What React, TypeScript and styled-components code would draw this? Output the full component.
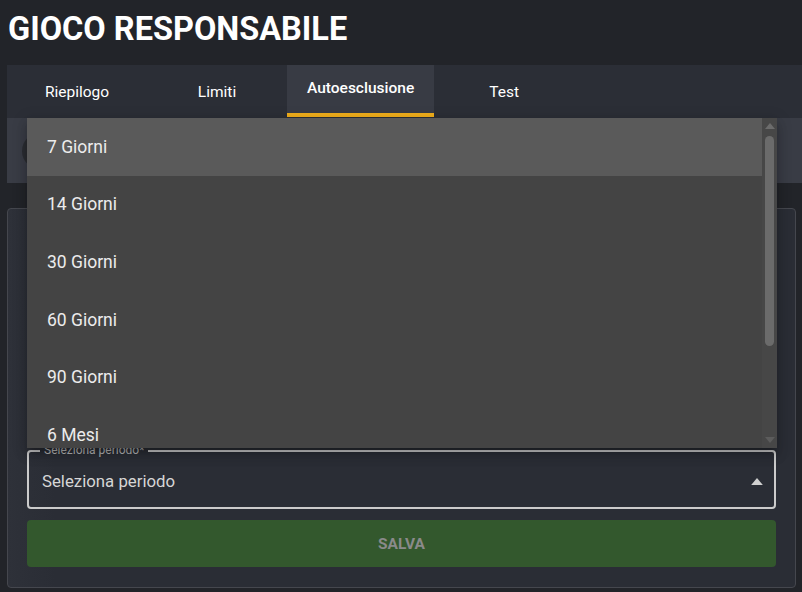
import React from "react";
import styled, {createGlobalStyle} from "styled-components";

const GlobalStyle = createGlobalStyle`
    body {
        margin: 0;
        background: #222429;
        font-family: Roboto, "Liberation Sans", sans-serif;
        color: #ffffff;
    }
`;

const Page = styled.div`
    position: relative;
    width: 802px;
    min-height: 592px;
    padding-left: 7px;
    box-sizing: border-box;
`;

const Title = styled.h1`
    margin: 0;
    height: 65px;
    box-sizing: border-box;
    padding: 13px 0 0 1px;
    font-size: 32.5px;
    line-height: 32px;
    font-weight: 700;
    color: #ffffff;
`;

const TabBar = styled.div`
    display: flex;
    height: 53px;
    background: #2b2e36;
`;

const Tab = styled.div<{ $active?: boolean }>`
    min-width: 140px;
    padding: 0 20px ${p => (p.$active ? "3px" : "0")};
    box-sizing: border-box;
    display: flex;
    align-items: center;
    justify-content: center;
    font-size: 15.5px;
    font-weight: ${p => (p.$active ? 500 : 400)};
    color: #ffffff;
    background: ${p => (p.$active ? "#383b44" : "transparent")};
    border-bottom: ${p => (p.$active ? "4px solid #efad1b" : "none")};
    margin-bottom: ${p => (p.$active ? "1px" : "0")};
`;

const SubHeader = styled.div`
    height: 65px;
    background: #393c45;
    display: flex;
    align-items: center;
    padding-left: 15px;
`;

const Avatar = styled.div`
    width: 36px;
    height: 36px;
    border-radius: 50%;
    background: #2a2c31;
`;

const Card = styled.div`
    margin: 25px 6px 0 0;
    border: 1px solid #45474e;
    border-radius: 4px;
    background: linear-gradient(90deg, #2e3139 0%, #2a2d35 6%, #2a2d35 100%);
    padding: 20px 19px 20px;
`;

const Intro = styled.div`
    height: 221px;
`;

const Field = styled.div`
    position: relative;
    height: 59px;
    box-sizing: border-box;
    border: 2px solid #cbcbcb;
    border-radius: 4px;
    display: flex;
    align-items: center;
    justify-content: space-between;
    padding: 3px 11px 0 13px;
`;

const FieldValue = styled.span`
    font-size: 16.8px;
    line-height: 20px;
    color: #d6d6d6;
`;

const FieldLabel = styled.span`
    position: absolute;
    left: 11px;
    top: -9px;
    padding: 0 4px;
    font-size: 12px;
    line-height: 14px;
    color: #b8b8b8;
    background: #2a2d35;
`;

const SaveButton = styled.button`
    margin-top: 11px;
    width: 100%;
    height: 47px;
    border: none;
    border-radius: 4px;
    background: #33582d;
    color: #8a8a8a;
    font-family: Roboto, "Liberation Sans", sans-serif;
    font-size: 15.5px;
    line-height: 20px;
    font-weight: 700;
`;

const Menu = styled.div`
    position: absolute;
    top: 118px;
    left: 27px;
    width: 750px;
    height: 330px;
    display: flex;
    background: #444444;
    box-shadow: 0 5px 5px -3px rgba(0, 0, 0, 0.2), 0 8px 10px 1px rgba(0, 0, 0, 0.14), 0 3px 14px 2px rgba(0, 0, 0, 0.12);
`;

const List = styled.ul`
    flex: 1;
    margin: 0;
    padding: 0;
    list-style: none;
    overflow: hidden;
`;

const Item = styled.li<{ $selected?: boolean }>`
    height: 57.6px;
    display: flex;
    align-items: center;
    padding-left: 20px;
    font-size: 17.5px;
    color: #ececec;
    background: ${p => (p.$selected ? "#5a5a5a" : "transparent")};
`;

const ScrollBar = styled.div`
    width: 15px;
    display: flex;
    flex-direction: column;
    align-items: center;
    background: #474747;
`;

const ScrollArrow = styled.div<{ $dim?: boolean }>`
    height: 16px;
    display: flex;
    align-items: center;
    justify-content: center;
    color: ${p => (p.$dim ? "#5c5c5c" : "#6c6c6c")};
`;

const Track = styled.div`
    flex: 1;
    padding-top: 2px;
`;

const Thumb = styled.div`
    width: 9px;
    height: 210px;
    border-radius: 5px;
    background: #6b6b6b;
`;

const Caret = ({up, size = 10, color = "currentColor"}: { up?: boolean; size?: number; color?: string }) => (
    <svg width={size} height={size / 2 + 1} viewBox="0 0 10 6">
        <path d={up ? "M0 6 L5 0 L10 6 Z" : "M0 0 L5 6 L10 0 Z"} fill={color}/>
    </svg>
);

const tabs = ["Riepilogo", "Limiti", "Autoesclusione", "Test"];
const periods = ["7 Giorni", "14 Giorni", "30 Giorni", "60 Giorni", "90 Giorni", "6 Mesi", "1 Anno", "Permanente"];

const App = () => {
    return (
        <Page>
            <GlobalStyle/>
            <Title>GIOCO RESPONSABILE</Title>

            <TabBar>
                {tabs.map(t => (
                    <Tab key={t} $active={t === "Autoesclusione"}>{t}</Tab>
                ))}
            </TabBar>

            <SubHeader>
                <Avatar/>
            </SubHeader>

            <Card>
                <Intro/>
                <Field>
                    <FieldLabel>Seleziona periodo*</FieldLabel>
                    <FieldValue>Seleziona periodo</FieldValue>
                    <Caret up size={12} color="#d0d0d0"/>
                </Field>
                <SaveButton disabled>SALVA</SaveButton>
            </Card>

            <Menu>
                <List>
                    {periods.map((p, i) => (
                        <Item key={p} $selected={i === 0}>{p}</Item>
                    ))}
                </List>
                <ScrollBar>
                    <ScrollArrow><Caret up size={10}/></ScrollArrow>
                    <Track><Thumb/></Track>
                    <ScrollArrow $dim><Caret size={10}/></ScrollArrow>
                </ScrollBar>
            </Menu>
        </Page>
    );
};

export default App;
